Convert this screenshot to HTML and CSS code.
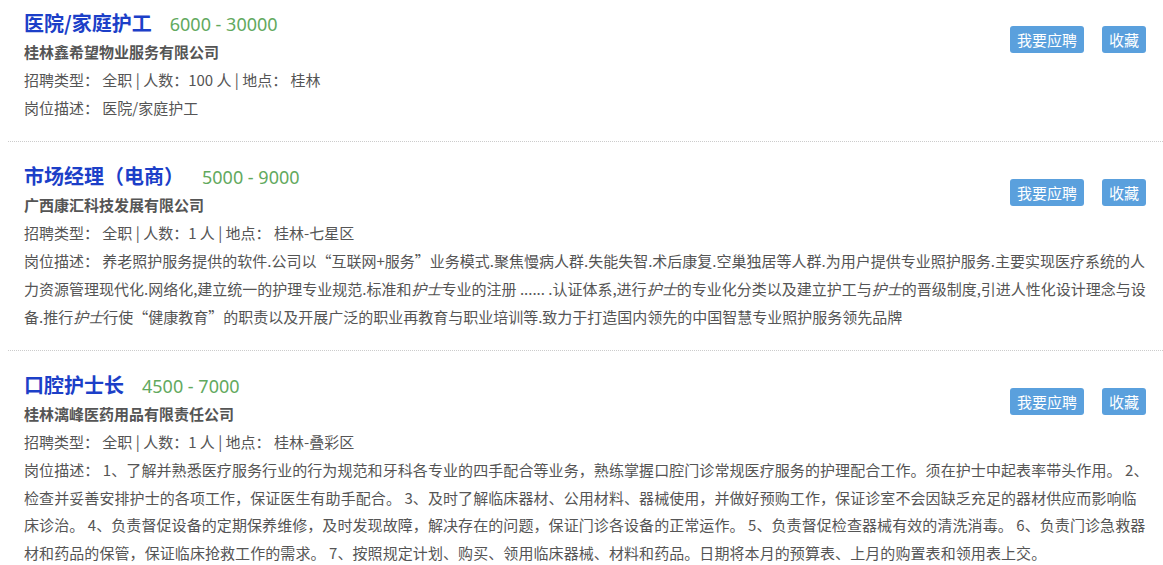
FILE: index.html
```html
<!DOCTYPE html>
<html lang="zh-CN">
<head>
  <meta charset="UTF-8"/>
  <meta name="viewport" content="width=device-width, initial-scale=1.0"/>
  <title>招聘信息</title>
  <link rel="stylesheet" href="styles.css">
</head>
<body>

  <div class="job-list">

    <div class="job-item">
      <div class="job-head">
        <div class="job-main">
          <h2 class="job-title">医院/家庭护工<span class="salary">6000 - 30000</span></h2>
          <div class="company">桂林鑫希望物业服务有限公司</div>
        </div>
        <div class="job-actions">
          <button class="btn">我要应聘</button>
          <button class="btn">收藏</button>
        </div>
      </div>
      <p class="info">招聘类型： 全职 | 人数：100 人 | 地点： 桂林</p>
      <p class="desc">岗位描述： 医院/家庭护工</p>
    </div>

    <div class="job-item">
      <div class="job-head">
        <div class="job-main">
          <h2 class="job-title">市场经理（电商）<span class="salary">5000 - 9000</span></h2>
          <div class="company">广西康汇科技发展有限公司</div>
        </div>
        <div class="job-actions">
          <button class="btn">我要应聘</button>
          <button class="btn">收藏</button>
        </div>
      </div>
      <p class="info">招聘类型： 全职 | 人数：1 人 | 地点： 桂林-七星区</p>
      <p class="desc">岗位描述： 养老照护服务提供的软件.公司以“互联网+服务”业务模式.聚焦慢病人群.失能失智.术后康复.空巢独居等人群.为用户提供专业照护服务.主要实现医疗系统的人力资源管理现代化.网络化,建立统一的护理专业规范.标准和<em>护士</em>专业的注册 ...... .认证体系,进行<em>护士</em>的专业化分类以及建立护工与<em>护士</em>的晋级制度,引进人性化设计理念与设备.推行<em>护士</em>行使“健康教育”的职责以及开展广泛的职业再教育与职业培训等.致力于打造国内领先的中国智慧专业照护服务领先品牌</p>
    </div>

    <div class="job-item">
      <div class="job-head">
        <div class="job-main">
          <h2 class="job-title">口腔护士长<span class="salary">4500 - 7000</span></h2>
          <div class="company">桂林漓峰医药用品有限责任公司</div>
        </div>
        <div class="job-actions">
          <button class="btn">我要应聘</button>
          <button class="btn">收藏</button>
        </div>
      </div>
      <p class="info">招聘类型： 全职 | 人数：1 人 | 地点： 桂林-叠彩区</p>
      <p class="desc desc-list">岗位描述： 1、了解并熟悉医疗服务行业的行为规范和牙科各专业的四手配合等业务，熟练掌握口腔门诊常规医疗服务的护理配合工作。须在护士中起表率带头作用。 2、检查并妥善安排护士的各项工作，保证医生有助手配合。 3、及时了解临床器材、公用材料、器械使用，并做好预购工作，保证诊室不会因缺乏充足的器材供应而影响临床诊治。 4、负责督促设备的定期保养维修，及时发现故障，解决存在的问题，保证门诊各设备的正常运作。 5、负责督促检查器械有效的清洗消毒。 6、负责门诊急救器材和药品的保管，保证临床抢救工作的需求。 7、按照规定计划、购买、领用临床器械、材料和药品。日期将本月的预算表、上月的购置表和领用表上交。</p>
    </div>

  </div>

</body>
</html>
```

FILE: styles.css
```css
* { box-sizing: border-box; margin: 0; padding: 0; }
body { font-family: "Noto Sans CJK SC", "Noto Sans", sans-serif; background: #fff; color: #555; }

.job-list {
  margin-left: 8px;
}

.job-item {
  padding: 20px 14px 20px 16px;
  border-bottom: 1px dotted #ccc;
}

.job-item:first-child {
  padding-top: 9px;
}

.job-head {
  display: flex;
  align-items: center;
  justify-content: space-between;
}

.job-title {
  font-size: 20px;
  line-height: 28px;
  font-weight: bold;
  color: #1c3fc8;
}

.salary {
  font-family: "Noto Sans", sans-serif;
  font-size: 18px;
  font-weight: normal;
  color: #62a95e;
  margin-left: 18px;
}

.company {
  font-size: 15px;
  line-height: 28px;
  font-weight: bold;
  color: #555;
}

.job-actions {
  display: flex;
  gap: 18px;
  margin: 4px 3px 0 0;
}

.btn {
  height: 27px;
  padding: 0 7px;
  border: none;
  border-radius: 3px;
  background-color: #5aa0dd;
  color: #fff;
  font-family: "Noto Sans CJK SC", sans-serif;
  font-size: 15px;
  cursor: pointer;
}

.btn:hover {
  background-color: #448dcc;
}

.info, .desc {
  font-size: 15px;
  line-height: 27.7px;
  color: #555;
}

.desc-list {
  letter-spacing: 0.08px;
}

.desc em {
  font-style: italic;
}
```
